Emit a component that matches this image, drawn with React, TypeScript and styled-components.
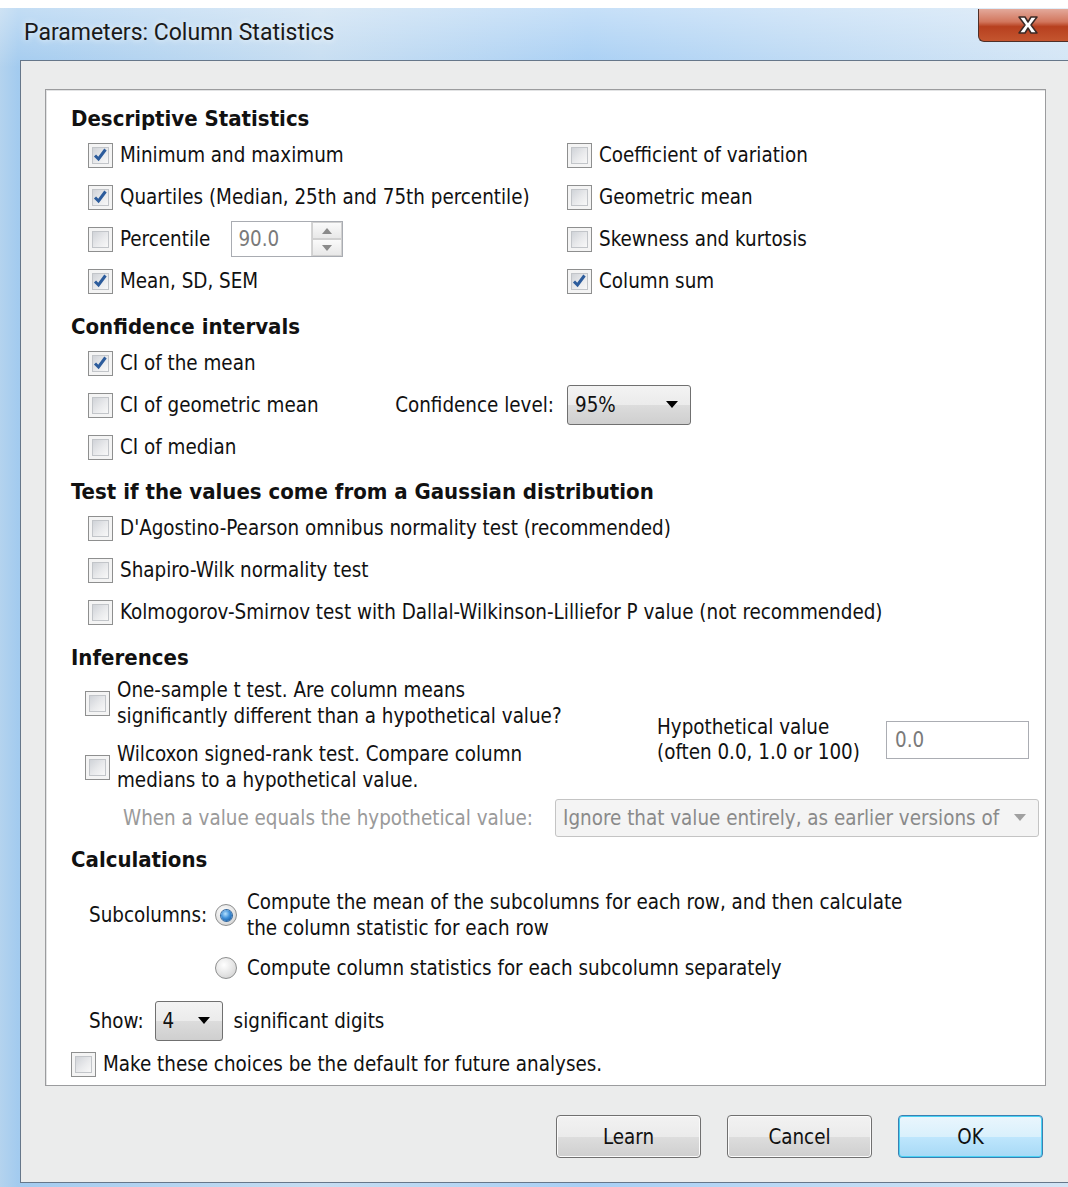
import React from 'react';
import styled, { createGlobalStyle } from 'styled-components';

const GlobalStyle = createGlobalStyle`
  html, body {
    margin: 0;
    padding: 0;
    background: #fff;
  }
  body {
    font-family: "DejaVu Sans Condensed", "Liberation Sans", sans-serif;
    font-size: 20.4px;
    color: #111;
  }
`;

const Window = styled.div`
  width: 1068px;
  height: 1187px;
  box-sizing: border-box;
  padding-top: 8px;
  overflow: hidden;
  background: #fff;
  display: flex;
  flex-direction: column;
`;

const Frame = styled.div`
  flex: 1;
  display: flex;
  flex-direction: column;
  background:
    linear-gradient(180deg, rgba(255, 255, 255, 0.35) 0, rgba(255, 255, 255, 0) 60px),
    linear-gradient(90deg, #b4d3ee 0, #a3cbef 18px, #c6ddf1 30%, #a8cff4 55%, #bcd9f4 75%, #d3e5f5 100%);
`;

const TitleBar = styled.div`
  height: 52px;
  display: flex;
  justify-content: space-between;
  align-items: flex-start;
  padding-left: 24px;
`;

const Title = styled.span`
  font-family: Roboto, "Liberation Sans", sans-serif;
  font-size: 23px;
  line-height: 50px;
  color: #1a1a1a;
  text-shadow: 0 0 6px rgba(255, 255, 255, 0.9);
`;

const CloseButton = styled.div`
  width: 90px;
  height: 33px;
  margin-top: 1px;
  box-sizing: border-box;
  border: 1px solid #4e2f28;
  border-top: none;
  border-right: none;
  border-radius: 0 0 0 6px;
  background: linear-gradient(180deg, #e3a99b 0, #d2765d 40%, #b7401f 55%, #c4552f 100%);
  display: flex;
  align-items: center;
  padding-left: 37px;
`;

const Client = styled.div`
  flex: 1;
  margin: 0 0 4px 20px;
  background: #ebecec;
  border: 1px solid #66778a;
  border-right: none;
  display: flex;
  flex-direction: column;
`;

const Panel = styled.div`
  margin: 28px 22px 0 24px;
  height: 997px;
  box-sizing: border-box;
  background: #fff;
  border: 1px solid #9b9c9e;
  box-shadow: inset 1px 1px 0 #e2e3e4;
  padding: 14px 0 0 25px;
`;

const Heading = styled.div<{ $gap?: number }>`
  font-weight: bold;
  font-size: 22px;
  height: 30px;
  line-height: 30px;
  margin-top: ${(p) => p.$gap ?? 0}px;
`;

const TwoColumns = styled.div`
  display: grid;
  grid-template-columns: 479px 1fr;
  padding-left: 17px;
`;

const Stack = styled.div`
  display: flex;
  flex-direction: column;
  padding-left: 17px;
`;

const Row = styled.div`
  height: 42px;
  display: flex;
  align-items: center;
`;

const Label = styled.span<{ $muted?: boolean }>`
  white-space: nowrap;
  color: ${(p) => (p.$muted ? '#9a9a9a' : '#111')};
`;

const BoxOuter = styled.span`
  width: 25px;
  height: 25px;
  box-sizing: border-box;
  flex: none;
  margin-right: 7px;
  border: 1px solid #8e8f8f;
  background: #f4f4f4;
  padding: 3px;
  display: inline-flex;
`;

const BoxInner = styled.span`
  flex: 1;
  border: 1px solid #c2c5c9;
  background: linear-gradient(135deg, #d0d3d8 0, #e9eaec 55%, #f8f8f8 100%);
  display: flex;
  align-items: center;
  justify-content: center;
`;

const CheckBox = ({ checked }: { checked?: boolean }) => (
  <BoxOuter>
    <BoxInner>
      {checked && (
        <svg width="15" height="15" viewBox="0 0 15 15">
          <path d="M2 7.5 L5.5 11 L12.5 1.5" fill="none" stroke="#2c5c9c" strokeWidth="3" />
        </svg>
      )}
    </BoxInner>
  </BoxOuter>
);

const Check = ({ checked, children }: { checked?: boolean; children: React.ReactNode }) => (
  <Row>
    <CheckBox checked={checked} />
    <Label>{children}</Label>
  </Row>
);

const Spin = styled.div`
  margin-left: 21px;
  width: 112px;
  height: 36px;
  box-sizing: border-box;
  border: 1px solid #a9acb2;
  display: flex;
  align-items: center;
  color: #7a7a7a;
  padding-left: 6px;
`;

const SpinButtons = styled.div`
  margin-left: auto;
  width: 30px;
  height: 34px;
  display: flex;
  flex-direction: column;
  border-left: 1px solid #d5d5d5;
`;

const SpinHalf = styled.div`
  flex: 1;
  display: flex;
  align-items: center;
  justify-content: center;
  background: linear-gradient(180deg, #fafafa, #e8e8e8);
  border: 1px solid #d0d0d0;
`;

const Combo = styled.div<{ $w: number; $disabled?: boolean }>`
  width: ${(p) => p.$w}px;
  height: ${(p) => (p.$disabled ? 38 : 40)}px;
  box-sizing: border-box;
  border: 1px solid ${(p) => (p.$disabled ? '#c4c4c4' : '#707070')};
  border-radius: 3px;
  background: ${(p) =>
    p.$disabled ? '#f4f4f4' : 'linear-gradient(180deg, #f3f3f3 0, #ebebeb 50%, #dcdcdc 51%, #cfcfcf 100%)'};
  display: flex;
  align-items: center;
  padding: 0 12px 0 7px;
  color: ${(p) => (p.$disabled ? '#8a8a8a' : '#111')};
  flex: none;
`;

const ComboText = styled.span`
  flex: 1;
  white-space: nowrap;
  overflow: hidden;
`;

const Arrow = ({ color = '#000' }: { color?: string }) => (
  <svg width="12" height="8" viewBox="0 0 12 8">
    <polygon points="0,0 12,0 6,7" fill={color} />
  </svg>
);

const LevelLabel = styled.span`
  margin-left: auto;
  margin-right: 13px;
`;

const CiRow = styled(Row)`
  width: 603px;
`;

const Inferences = styled.div`
  display: grid;
  grid-template-columns: 572px 1fr;
  padding-left: 14px;
  margin-top: 4px;
`;

const InferenceItem = styled.div`
  display: flex;
  align-items: center;
  height: 52px;
  margin-bottom: 12px;
  line-height: 26px;
`;

const Hypothetical = styled.div`
  display: flex;
  align-items: center;
  margin-bottom: 2px;
`;

const HypoLabel = styled.div`
  line-height: 25px;
  width: 229px;
  white-space: nowrap;
`;

const TextField = styled.div`
  width: 143px;
  height: 38px;
  box-sizing: border-box;
  border: 1px solid #abadb3;
  color: #7a7a7a;
  padding: 6px 0 0 8px;
`;

const WhenRow = styled.div`
  display: flex;
  align-items: center;
  padding-left: 52px;
  margin-top: -6px;
  gap: 22px;
`;

const CalcGrid = styled.div`
  display: grid;
  grid-template-columns: 126px 1fr;
  align-items: center;
  padding-left: 18px;
  margin-top: 14px;
`;

const RadioOption = styled.div<{ $gap?: number }>`
  display: flex;
  align-items: center;
  line-height: 26px;
  margin-top: ${(p) => p.$gap ?? 0}px;
`;

const RadioCircle = styled.span<{ $on?: boolean }>`
  width: 22px;
  height: 22px;
  flex: none;
  box-sizing: border-box;
  border-radius: 50%;
  border: 1px solid #8e8f8f;
  background: radial-gradient(circle at 40% 35%, #ffffff 0, #e4e4e4 55%, #c8c8c8 100%);
  display: flex;
  align-items: center;
  justify-content: center;
  margin-right: 10px;
  &::after {
    content: '';
    display: ${(p) => (p.$on ? 'block' : 'none')};
    width: 11px;
    height: 11px;
    border-radius: 50%;
    background: radial-gradient(circle at 40% 35%, #b6e2ff 0, #3e8fd8 45%, #0d4a8f 100%);
    box-shadow: 0 0 0 1px #31669c;
  }
`;

const ShowRow = styled.div`
  display: flex;
  align-items: center;
  gap: 11px;
  padding-left: 18px;
  margin-top: 20px;
`;

const DefaultRow = styled(Row)`
  margin-top: 2px;
`;

const Footer = styled.div`
  display: flex;
  justify-content: flex-end;
  gap: 26px;
  padding: 29px 25px 0 0;
`;

const Button = styled.div<{ $default?: boolean }>`
  width: 145px;
  height: 43px;
  box-sizing: border-box;
  border-radius: 4px;
  border: 1px solid ${(p) => (p.$default ? '#3c7fb1' : '#707070')};
  box-shadow: inset 0 0 0 1px ${(p) => (p.$default ? '#48d2f4' : '#fbfbfb')};
  background: ${(p) =>
    p.$default
      ? 'linear-gradient(180deg, #eaf6fd 0, #d9f0fc 50%, #bee6fd 51%, #a7d9f5 100%)'
      : 'linear-gradient(180deg, #f2f2f2 0, #ebebeb 50%, #dddddd 51%, #cfcfcf 100%)'};
  display: flex;
  align-items: center;
  justify-content: center;
`;

export default function App() {
  return (
    <>
      <GlobalStyle />
      <Window>
        <Frame>
          <TitleBar>
            <Title>Parameters: Column Statistics</Title>
            <CloseButton>
              <svg width="24" height="20" viewBox="0 0 24 20">
                <path
                  d="M3 2 H9 L12 7 L15 2 H21 L15 10 L21 18 H15 L12 13 L9 18 H3 L9 10 Z"
                  fill="#fff"
                  stroke="#3b2a26"
                  strokeWidth="1.5"
                  strokeLinejoin="round"
                />
              </svg>
            </CloseButton>
          </TitleBar>

          <Client>
            <Panel>
              <Heading>Descriptive Statistics</Heading>
              <TwoColumns>
                <div>
                  <Check checked>Minimum and maximum</Check>
                  <Check checked>Quartiles (Median, 25th and 75th percentile)</Check>
                  <Row>
                    <CheckBox />
                    <Label>Percentile</Label>
                    <Spin>
                      90.0
                      <SpinButtons>
                        <SpinHalf>
                          <svg width="10" height="6" viewBox="0 0 10 6"><polygon points="0,6 10,6 5,0" fill="#8a8a8a" /></svg>
                        </SpinHalf>
                        <SpinHalf>
                          <svg width="10" height="6" viewBox="0 0 10 6"><polygon points="0,0 10,0 5,6" fill="#8a8a8a" /></svg>
                        </SpinHalf>
                      </SpinButtons>
                    </Spin>
                  </Row>
                  <Check checked>Mean, SD, SEM</Check>
                </div>
                <div>
                  <Check>Coefficient of variation</Check>
                  <Check>Geometric mean</Check>
                  <Check>Skewness and kurtosis</Check>
                  <Check checked>Column sum</Check>
                </div>
              </TwoColumns>

              <Heading $gap={10}>Confidence intervals</Heading>
              <Stack>
                <Check checked>CI of the mean</Check>
                <CiRow>
                  <CheckBox />
                  <Label>CI of geometric mean</Label>
                  <LevelLabel>Confidence level:</LevelLabel>
                  <Combo $w={124}>
                    <ComboText>95%</ComboText>
                    <Arrow />
                  </Combo>
                </CiRow>
                <Check>CI of median</Check>
              </Stack>

              <Heading $gap={9}>Test if the values come from a Gaussian distribution</Heading>
              <Stack>
                <Check>D'Agostino-Pearson omnibus normality test (recommended)</Check>
                <Check>Shapiro-Wilk normality test</Check>
                <Check>Kolmogorov-Smirnov test with Dallal-Wilkinson-Lilliefor P value (not recommended)</Check>
              </Stack>

              <Heading $gap={10}>Inferences</Heading>
              <Inferences>
                <div>
                  <InferenceItem>
                    <CheckBox />
                    <Label>
                      One-sample t test. Are column means
                      <br />
                      significantly different than a hypothetical value?
                    </Label>
                  </InferenceItem>
                  <InferenceItem>
                    <CheckBox />
                    <Label>
                      Wilcoxon signed-rank test. Compare column
                      <br />
                      medians to a hypothetical value.
                    </Label>
                  </InferenceItem>
                </div>
                <Hypothetical>
                  <HypoLabel>
                    Hypothetical value
                    <br />
                    (often 0.0, 1.0 or 100)
                  </HypoLabel>
                  <TextField>0.0</TextField>
                </Hypothetical>
              </Inferences>
              <WhenRow>
                <Label $muted>When a value equals the hypothetical value:</Label>
                <Combo $w={484} $disabled>
                  <ComboText>Ignore that value entirely, as earlier versions of</ComboText>
                  <Arrow color="#a0a0a0" />
                </Combo>
              </WhenRow>

              <Heading $gap={8}>Calculations</Heading>
              <CalcGrid>
                <Label>Subcolumns:</Label>
                <RadioOption>
                  <RadioCircle $on />
                  <Label>
                    Compute the mean of the subcolumns for each row, and then calculate
                    <br />
                    the column statistic for each row
                  </Label>
                </RadioOption>
                <span />
                <RadioOption $gap={14}>
                  <RadioCircle />
                  <Label>Compute column statistics for each subcolumn separately</Label>
                </RadioOption>
              </CalcGrid>
              <ShowRow>
                <Label>Show:</Label>
                <Combo $w={68}>
                  <ComboText>4</ComboText>
                  <Arrow />
                </Combo>
                <Label>significant digits</Label>
              </ShowRow>
              <DefaultRow>
                <CheckBox />
                <Label>Make these choices be the default for future analyses.</Label>
              </DefaultRow>
            </Panel>

            <Footer>
              <Button>Learn</Button>
              <Button>Cancel</Button>
              <Button $default>OK</Button>
            </Footer>
          </Client>
        </Frame>
      </Window>
    </>
  );
}
